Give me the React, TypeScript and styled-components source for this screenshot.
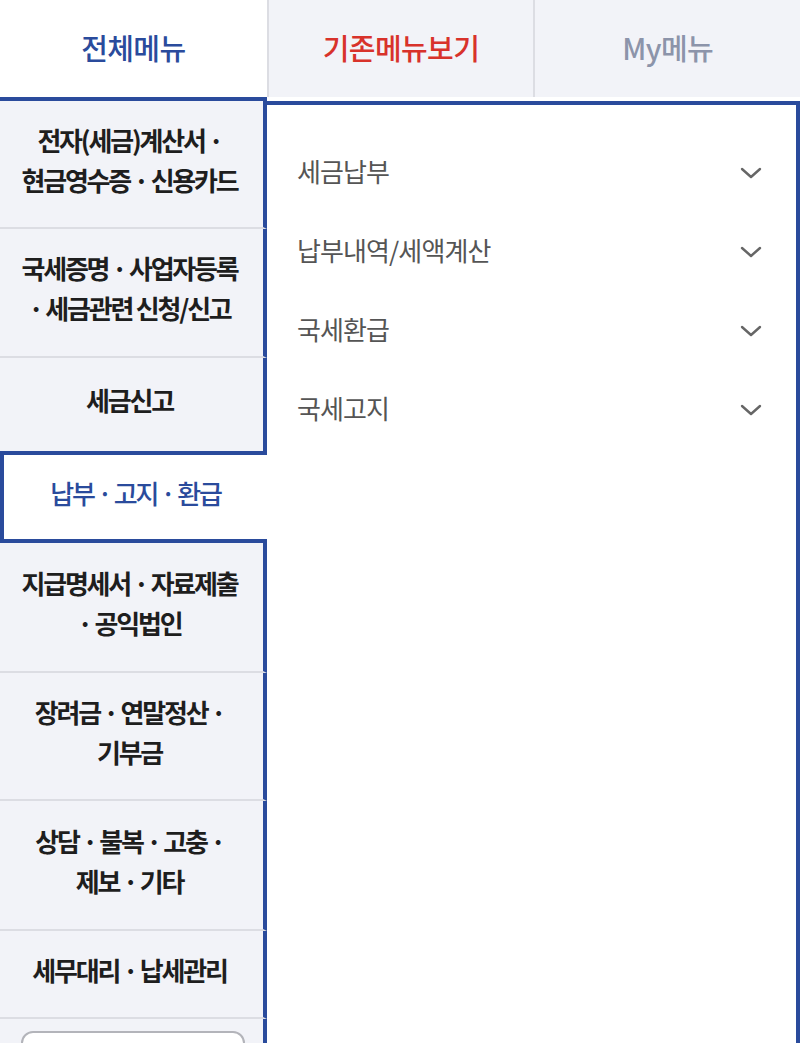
import React, { useState } from 'react'
import styled, { createGlobalStyle } from 'styled-components'

const GlobalStyle = createGlobalStyle`
    html, body {
        margin: 0;
        padding: 0;
        background: #fff;
    }
    body {
        font-family: "Noto Sans CJK KR", "Noto Sans", sans-serif;
        overflow: hidden;
    }
`

const BLUE = '#2a4b9c'
const GRAY_BG = '#f2f3f8'
const LINE = '#dcdde3'

const Page = styled.div`
    display: flex;
    flex-direction: column;
    width: 800px;
    height: 1043px;
    overflow: hidden;
`

const Tabs = styled.div`
    display: grid;
    grid-template-columns: repeat(3, 1fr);
    height: 97px;
    flex-shrink: 0;
`

const Tab = styled.button<{ $active?: boolean; $color: string }>`
    border: none;
    border-left: ${p => (p.$active ? 'none' : `2px solid ${LINE}`)};
    background: ${p => (p.$active ? '#fff' : GRAY_BG)};
    color: ${p => p.$color};
    font-family: inherit;
    font-size: 29px;
    font-weight: 500;
    letter-spacing: -0.6px;
    padding: 0 0 4px;
    cursor: pointer;
`

const Body = styled.div`
    flex: 1;
    display: grid;
    grid-template-columns: 267px 1fr;
    min-height: 0;
`

const SideMenu = styled.ul`
    list-style: none;
    margin: 0;
    padding: 0;
    border-top: 4px solid ${BLUE};
    background: ${GRAY_BG};
    display: flex;
    flex-direction: column;
`

const SideItem = styled.li<{ $active?: boolean; $h: number }>`
    height: ${p => p.$h}px;
    flex-shrink: 0;
    box-sizing: border-box;
    display: flex;
    align-items: center;
    justify-content: center;
    text-align: center;
    white-space: pre-line;
    font-size: 26px;
    line-height: 40px;
    letter-spacing: -2.2px;
    padding: 0 ${p => (p.$active ? '0' : '4px')} 9px 0;
    font-weight: ${p => (p.$active ? 500 : 700)};
    color: ${p => (p.$active ? BLUE : '#1e1e1e')};
    background: ${p => (p.$active ? '#fff' : GRAY_BG)};
    border-right: ${p => (p.$active ? 'none' : `4px solid ${BLUE}`)};
    border-bottom: ${p => (p.$active ? `4px solid ${BLUE}` : `2px solid ${LINE}`)};
    border-top: ${p => (p.$active ? `4px solid ${BLUE}` : 'none')};
    border-left: ${p => (p.$active ? `4px solid ${BLUE}` : 'none')};
    cursor: pointer;

    &:has(+ li[data-active='true']) {
        border-bottom: none;
    }
`

const SideFooter = styled.li`
    flex: 1;
    border-right: 4px solid ${BLUE};
    padding: 12px 18px 0 21px;
`

const OutlineButton = styled.button`
    display: block;
    width: 224px;
    height: 48px;
    border: 2px solid #b3b4ba;
    border-radius: 12px;
    background: #fff;
`

const Panel = styled.div`
    margin-top: 4px;
    border-top: 4px solid ${BLUE};
    border-right: 4px solid ${BLUE};
    background: #fff;
    padding: 28px 34px 0 30px;
`

const SubList = styled.ul`
    list-style: none;
    margin: 0;
    padding: 0;
`

const SubItem = styled.li`
    height: 79px;
    display: flex;
    align-items: center;
    justify-content: space-between;
    font-size: 26px;
    letter-spacing: -0.9px;
    color: #555;
    cursor: pointer;

    span {
        padding-bottom: 4px;
    }
`

const Chevron = () => (
    <svg width="22" height="14" viewBox="0 0 22 14" fill="none">
        <path d="M2 3l9 8 9-8" stroke="#666" strokeWidth="2.4" strokeLinecap="round" strokeLinejoin="round" />
    </svg>
)

const sideItems = [
    { label: '전자(세금)계산서 ·\n현금영수증 · 신용카드', h: 128 },
    { label: '국세증명 · 사업자등록\n· 세금관련 신청/신고', h: 129 },
    { label: '세금신고', h: 93 },
    { label: '납부 · 고지 · 환급', h: 92 },
    { label: '지급명세서 · 자료제출\n· 공익법인', h: 130 },
    { label: '장려금 · 연말정산 ·\n기부금', h: 128 },
    { label: '상담 · 불복 · 고충 ·\n제보 · 기타', h: 130 },
    { label: '세무대리 · 납세관리', h: 88 },
]

const subItems = ['세금납부', '납부내역/세액계산', '국세환급', '국세고지']

export default function App() {
    const [active, setActive] = useState(3)
    return (
        <Page>
            <GlobalStyle />
            <Tabs>
                <Tab $active $color={BLUE}>전체메뉴</Tab>
                <Tab $color="#d8322b">기존메뉴보기</Tab>
                <Tab $color="#8c94aa">My메뉴</Tab>
            </Tabs>
            <Body>
                <SideMenu>
                    {sideItems.map((item, i) => (
                        <SideItem
                            key={item.label}
                            $h={item.h}
                            $active={i === active}
                            data-active={i === active ? 'true' : 'false'}
                            onClick={() => setActive(i)}
                        >
                            {item.label}
                        </SideItem>
                    ))}
                    <SideFooter>
                        <OutlineButton />
                    </SideFooter>
                </SideMenu>
                <Panel>
                    <SubList>
                        {subItems.map(s => (
                            <SubItem key={s}>
                                <span>{s}</span>
                                <Chevron />
                            </SubItem>
                        ))}
                    </SubList>
                </Panel>
            </Body>
        </Page>
    )
}
